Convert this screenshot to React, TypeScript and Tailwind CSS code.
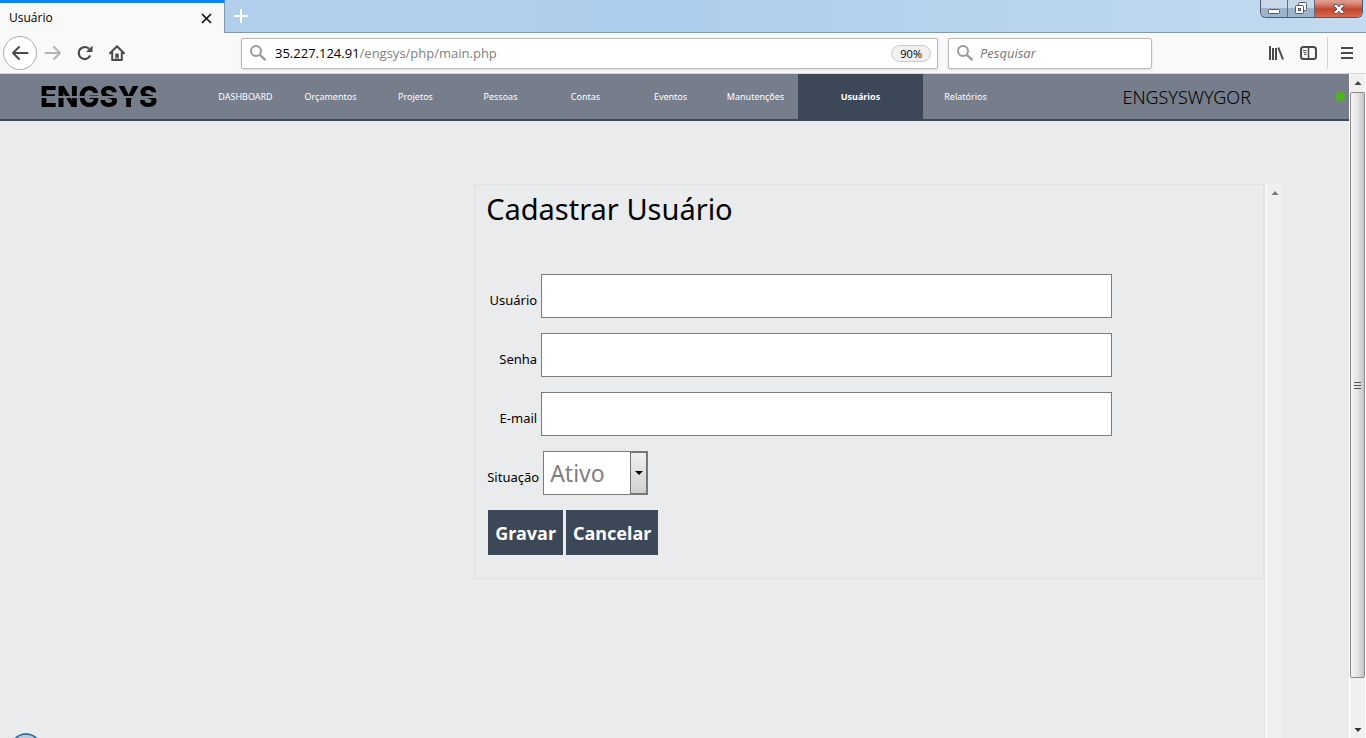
import type { ReactNode } from "react";

const navItems = ["DASHBOARD", "Orçamentos", "Projetos", "Pessoas", "Contas", "Eventos", "Manutenções", "Usuários", "Relatórios"];

const fields = [
  { id: "usuario", label: "Usuário", type: "text" },
  { id: "senha", label: "Senha", type: "password" },
  { id: "email", label: "E-mail", type: "email" },
];

function SearchIcon() {
  return (
    <svg width="18" height="18" viewBox="0 0 18 18" fill="none" stroke="#9a9a9a" className="shrink-0">
      <circle cx="7" cy="7" r="5" strokeWidth="2" />
      <path d="M10.8 10.8L16.5 16.2" strokeWidth="2.4" />
    </svg>
  );
}

function ToolButton({ label, children }: { label: string; children: ReactNode }) {
  return (
    <button type="button" aria-label={label} className="flex size-8 shrink-0 items-center justify-center">
      {children}
    </button>
  );
}

function TitleBar() {
  return (
    <header className="flex h-[33px] shrink-0 bg-linear-to-r from-[#b3d0ec] via-[#adceec] to-[#c3daf0]">
      <div className="flex w-[225px] items-center justify-between border-t-3 border-r border-t-[#0a84ff] border-r-[#7f98b2] bg-[#f9f9fa] pr-3 pl-[9px] text-xs">
        <span>Usuário</span>
        <button type="button" aria-label="Fechar aba">
          <svg width="11" height="11" viewBox="0 0 11 11" stroke="#111" strokeWidth="1.7">
            <path d="M1 1L10 10M10 1L1 10" />
          </svg>
        </button>
      </div>
      <div className="flex flex-1 justify-between border-b border-[#7f98b2]">
        <button type="button" aria-label="Nova aba" className="flex h-8 w-8 items-center justify-center">
          <svg width="14" height="14" viewBox="0 0 14 14" stroke="#fff" strokeWidth="2">
            <path d="M7 0V14M0 7H14" />
          </svg>
        </button>
        <div className="mr-[3px] flex h-[18px] overflow-hidden rounded-b-md border border-t-0 border-[#4c5a6b]">
          <button type="button" aria-label="Minimizar" className="flex w-[27px] items-center justify-center border-r border-[#5c6b7d] bg-linear-to-b from-[#c9d8e8] from-50% to-[#9db3ca] to-50%">
            <svg width="14" height="14" viewBox="0 0 14 14">
              <rect x="1.5" y="7.5" width="11" height="4" rx="1" fill="#fff" stroke="#525966" />
            </svg>
          </button>
          <button type="button" aria-label="Restaurar" className="flex w-[27px] items-center justify-center border-r border-[#5c6b7d] bg-linear-to-b from-[#c9d8e8] from-50% to-[#9db3ca] to-50%">
            <svg width="14" height="14" viewBox="0 0 14 14" fill="#fff" stroke="#525966">
              <rect x="4.5" y="0.5" width="8" height="8" rx="1" />
              <rect x="1.5" y="3.5" width="8" height="8" rx="1" />
              <rect x="4.5" y="6.5" width="2" height="2" fill="#b0c2d6" />
            </svg>
          </button>
          <button type="button" aria-label="Fechar" className="flex w-[47px] items-center justify-center bg-linear-to-b from-[#dd9a8b] from-10% via-[#c2452c] via-55% to-[#d9694d]">
            <svg width="14" height="12" viewBox="0 0 14 12">
              <path d="M2 1.500h3l2 2.300 2-2.300h3v1.500L9 6l3 3v1.500H9L7 8.200 5 10.500H2V9l3-3-3-3z" fill="#fff" stroke="#525966" />
            </svg>
          </button>
        </div>
      </div>
    </header>
  );
}

function Toolbar() {
  return (
    <div className="flex h-[41px] shrink-0 items-center border-b border-[#d8d8da] bg-[#f9f9fa] pr-[3px] pl-[3px]">
      <button type="button" aria-label="Voltar" className="flex size-[34px] shrink-0 items-center justify-center rounded-full border border-[#adadad] bg-white">
        <svg width="18" height="16" viewBox="0 0 18 16" fill="none" stroke="#4a4a4a" strokeWidth="2" strokeLinecap="round" strokeLinejoin="round">
          <path d="M16.500 8H2M8 2L2 8l6 6" />
        </svg>
      </button>
      <ToolButton label="Avançar">
        <svg width="18" height="16" viewBox="0 0 18 16" fill="none" stroke="#b4b4b4" strokeWidth="2" strokeLinecap="round" strokeLinejoin="round">
          <path d="M1.500 8H16M10 2l6 6-6 6" />
        </svg>
      </ToolButton>
      <ToolButton label="Recarregar">
        <svg width="16" height="16" viewBox="0 0 16 16" fill="none" stroke="#4a4a4a" strokeWidth="2.200">
          <path d="M13.200 10.500A6 6 0 1 1 12 3.800" />
          <path d="M15.500 0.500V7H9z" fill="#4a4a4a" stroke="none" />
        </svg>
      </ToolButton>
      <ToolButton label="Página inicial">
        <svg width="16" height="16" viewBox="0 0 16 16" fill="none" stroke="#4a4a4a" strokeWidth="2" strokeLinejoin="round" strokeLinecap="round">
          <path d="M1 8.200L8 1.200l7 7M3.200 7.500V15h9.600V7.500" />
          <path d="M6.300 8.500h3.400V15H8.600v-2.500H7.600V15H6.300z" fill="#4a4a4a" stroke="none" />
        </svg>
      </ToolButton>
      <div className="ml-[108px] flex h-[31px] flex-1 items-center rounded-xs border border-[#b9b9bb] bg-white pr-1.5 pl-[7px] shadow-sm">
        <SearchIcon />
        <div className="ml-2 flex-1 pt-0.5 text-[13px] text-[#808080]">
          <span className="text-black">35.227.124.91</span>/engsys/php/main.php
        </div>
        <button type="button" className="h-[17px] rounded-full border border-[#cbcbcd] bg-[#f0f0f1] px-2 text-[11px] leading-[15px]">90%</button>
      </div>
      <div className="ml-2.5 flex h-[31px] w-[204px] items-center rounded-xs border border-[#b9b9bb] bg-white px-[7px] shadow-sm">
        <SearchIcon />
        <input aria-label="Pesquisar" placeholder="Pesquisar" className="ml-1.5 w-full min-w-0 pt-0.5 text-[13px] italic outline-none placeholder:text-[#777]" />
      </div>
      <div className="ml-[108px] flex items-center">
        <ToolButton label="Biblioteca">
          <svg width="16" height="16" viewBox="0 0 16 16" stroke="#4a4a4a" strokeWidth="2">
            <path d="M2 1V15M5 3V15M8 3V15M10.300 2.500L15 14.500" />
          </svg>
        </ToolButton>
        <ToolButton label="Barra lateral">
          <svg width="17" height="14" viewBox="0 0 17 14" fill="none" stroke="#4a4a4a" strokeWidth="2">
            <rect x="1" y="1" width="15" height="12" rx="2.500" />
            <path d="M8.500 1V13" strokeWidth="1.500" />
            <path d="M3 4.500H6.500M3.500 6.500H6.500M4 8.500H6.500" strokeWidth="1" />
          </svg>
        </ToolButton>
        <div className="mr-[3px] ml-[3px] h-8 border-l border-[#d5d5d7]" />
        <ToolButton label="Menu">
          <svg width="12" height="12" viewBox="0 0 12 12" stroke="#4a4a4a" strokeWidth="2">
            <path d="M0 1H12M0 6H12M0 11H12" />
          </svg>
        </ToolButton>
      </div>
    </div>
  );
}

function SiteNav() {
  return (
    <nav className="flex h-[47px] shrink-0 items-stretch border-b-2 border-[#3c4857] bg-[#777e8b] text-white">
      <a href="#inicio" className="flex w-[203px] shrink-0 items-center pl-10">
        <span className="bg-[linear-gradient(#000_13px,transparent_13px,transparent_15px,#000_15px)] bg-clip-text font-['Inter'] text-[28px] leading-7 font-extrabold text-transparent">ENGSYS</span>
      </a>
      {navItems.map((item) =>
        item === "Usuários" ? (
          <a key={item} href="#usuarios" aria-current="page" className="flex w-[125px] shrink-0 items-center justify-center bg-[#3c4857] text-[9px] font-bold">
            {item}
          </a>
        ) : (
          <a key={item} href={"#" + item} className="flex w-[85px] shrink-0 items-center justify-center text-[9px]">
            {item}
          </a>
        ),
      )}
      <div className="flex flex-1 items-center justify-end gap-[85px] pr-1 text-black">
        <span className="text-lg font-light">ENGSYSWYGOR</span>
        <span className="size-[9px] rounded-full bg-[#4bb814]" />
      </div>
    </nav>
  );
}

function UserForm() {
  return (
    <form className="mr-[2px] ml-[2px] flex-1 self-start border border-[#e0e1e3] pb-[23px]">
      <h1 className="mt-1 ml-[11px] text-[29px] leading-10">Cadastrar Usuário</h1>
      <div className="mt-[45px] flex flex-col gap-[15px]">
        {fields.map((field) => (
          <div key={field.id} className="flex gap-1">
            <label htmlFor={field.id} className="w-[62px] shrink-0 pt-4 text-right text-[13px] leading-5">
              {field.label}
            </label>
            <input id={field.id} type={field.type} className="h-11 w-[571px] min-w-0 border border-[#7b7b7b] bg-white px-2 text-2xl" />
          </div>
        ))}
        <div className="flex gap-1">
          <label htmlFor="situacao" className="w-16 shrink-0 pt-4 text-right text-[13px] leading-5">
            Situação
          </label>
          <div className="relative w-[105px]">
            <select id="situacao" className="h-11 w-full appearance-none border border-[#7b7b7b] bg-white pl-1.5 text-[23px] text-[#808080]">
              <option>Ativo</option>
              <option>Inativo</option>
            </select>
            <span className="pointer-events-none absolute inset-y-px right-px flex w-[17px] items-center justify-center border border-[#707070] bg-linear-to-b from-[#f0f0f0] via-[#e0e0e0] to-[#d0d0d0]">
              <svg width="8" height="4" viewBox="0 0 8 4">
                <path d="M0 0H8L4 4z" />
              </svg>
            </span>
          </div>
        </div>
        <div className="ml-[13px] flex gap-[3px] text-lg font-bold text-white">
          <button type="submit" className="h-[45px] w-[75px] bg-[#3c4857]">Gravar</button>
          <button type="button" className="h-[45px] w-[92px] bg-[#3c4857]">Cancelar</button>
        </div>
      </div>
    </form>
  );
}

function WindowScrollbar() {
  return (
    <div aria-hidden="true" className="flex w-[17px] shrink-0 flex-col items-center border-r border-l border-white bg-[#f0f0f1]">
      <svg width="8" height="18" viewBox="0 0 8 18">
        <path d="M0.500 11H7.500L4 7z" fill="#444" />
      </svg>
      <div className="flex w-[15px] flex-1 items-center justify-center rounded-xs border border-[#8b8b8d] bg-linear-to-r from-[#f6f6f7] via-[#e4e4e6] to-[#c3c4c8]">
        <svg width="8" height="9" viewBox="0 0 8 9" stroke="#555" strokeWidth="1">
          <path d="M0 1.500H7M0 4.500H7M0 7.500H7" />
        </svg>
      </div>
      <svg width="8" height="60" viewBox="0 0 8 60">
        <path d="M0.500 50H7.500L4 54z" fill="#333" />
      </svg>
    </div>
  );
}

export default function App() {
  return (
    <div className="flex h-screen flex-col overflow-hidden bg-[#eaebed] font-['Open_Sans',sans-serif] text-black">
      <TitleBar />
      <Toolbar />
      <div className="flex min-h-0 flex-1">
        <div className="relative flex min-w-0 flex-1 flex-col font-['Noto_Sans',sans-serif]">
          <SiteNav />
          <main className="mt-[63px] ml-[35%] flex min-h-0 w-[60%] flex-1">
            <UserForm />
            <div aria-hidden="true" className="w-4 shrink-0 border-l border-white bg-[#efefef] pt-1.5 pl-1">
              <svg width="8" height="5" viewBox="0 0 8 5">
                <path d="M0.500 5H7.500L4 1z" fill="#777" />
              </svg>
            </div>
          </main>
          <div className="absolute bottom-0 left-3 h-[5px] w-7 overflow-hidden">
            <svg width="28" height="28" viewBox="0 0 28 28">
              <circle cx="14" cy="16" r="15" fill="#b5c9dc" stroke="#2b5f8c" strokeWidth="1.500" />
            </svg>
          </div>
        </div>
        <WindowScrollbar />
      </div>
    </div>
  );
}
